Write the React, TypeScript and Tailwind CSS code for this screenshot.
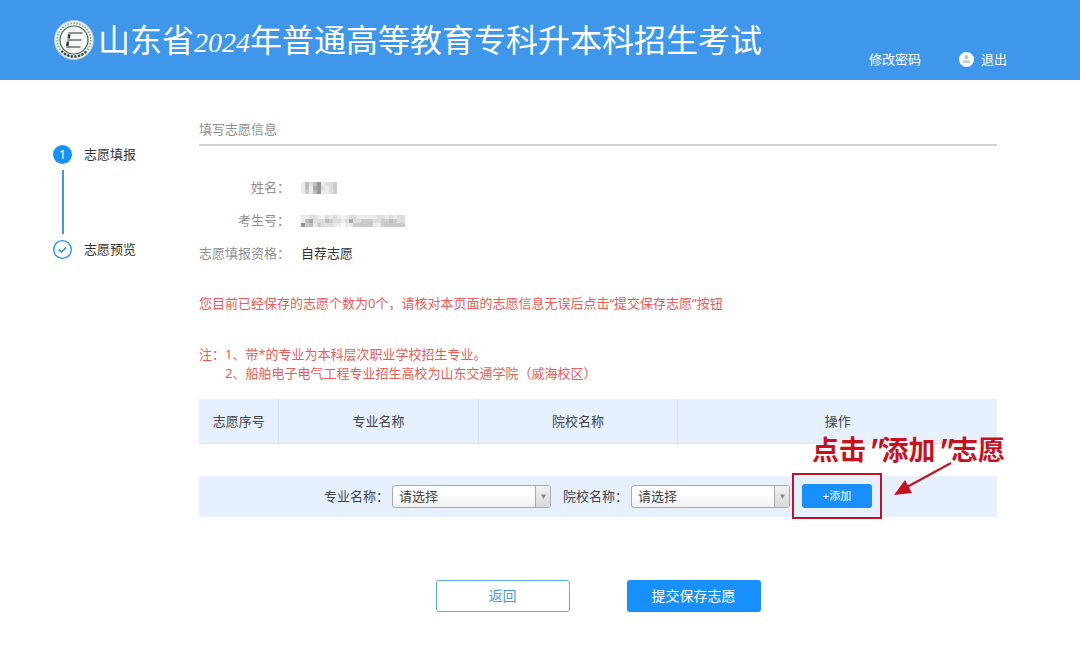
import React from "react";

const nameMosaic = ["142461223", "141562123", "131461123"];
const idMosaic = [
  "11221021210122111112212122",
  "14522243221252233322334322",
  "63413222110113333311333333",
];
const shades = ["#f8f8f8", "#ebebeb", "#dddddd", "#cbcbcb", "#bdbdbd", "#a9a9a9", "#949494"];

function Mosaic({ rows, cellWidth, cellHeight, label }: { rows: string[]; cellWidth: number; cellHeight: number; label: string }) {
  const width = rows[0].length * cellWidth;
  const height = rows.length * cellHeight;
  return (
    <svg width={width} height={height} viewBox={`0 0 ${width} ${height}`} role="img" aria-label={label} shapeRendering="crispEdges">
      {rows.map((row, y) =>
        row.split("").map((shade, x) => (
          <rect key={`${x}-${y}`} x={x * cellWidth} y={y * cellHeight} width={cellWidth} height={cellHeight} fill={shades[Number(shade)]} />
        )),
      )}
    </svg>
  );
}

function Logo() {
  return (
    <svg width="40" height="40" viewBox="0 0 40 40" aria-hidden="true" className="shrink-0">
      <circle cx="20" cy="20" r="19.5" fill="#e9f1ee" stroke="#b9ccc4" />
      <circle cx="20" cy="20" r="16.8" fill="none" stroke="#8fa398" strokeWidth="1.6" strokeDasharray="1.5 1.5" />
      <circle cx="20" cy="20" r="14" fill="#f5f8f6" stroke="#456a50" strokeWidth="1.2" />
      <path d="M7.5 31A16.8 16.8 0 0 0 32.5 31" fill="none" stroke="#34433a" strokeWidth="2.4" strokeDasharray="2 1.6" />
      <path d="M15 13H28.5M14 20H27.5M12.5 27H26.5" stroke="#8d9390" strokeWidth="2.2" />
      <path d="M15.6 12L13.2 28" stroke="#8d9390" strokeWidth="2" />
      <path d="M15.2 14.5L14.8 18M13.8 22L13.2 26" stroke="#24402d" strokeWidth="2.4" />
    </svg>
  );
}

function UserIcon() {
  return (
    <svg width="15" height="15" viewBox="0 0 15 15" aria-hidden="true">
      <circle cx="7.5" cy="7.5" r="7.5" fill="#fff" />
      <circle cx="7.5" cy="5.2" r="2.1" fill="#c3c8d0" />
      <path d="M3.5 11c0-2 1.5-3 4-3s4 1 4 3z" fill="#c3c8d0" />
    </svg>
  );
}

function Field({ label, children }: { label: string; children: React.ReactNode }) {
  return (
    <div className="flex h-[33px] items-center">
      <dt className="w-[91px] text-right whitespace-nowrap text-[#8f8f8f]">{label}</dt>
      <dd className="ml-[11px] text-[#333]">{children}</dd>
    </div>
  );
}

function Picker({ id, label }: { id: string; label: string }) {
  return (
    <div className="flex items-center">
      <label htmlFor={id}>{label}</label>
      <div className="relative ml-[3px]">
        <select
          id={id}
          className="block h-[23px] w-[159px] appearance-none rounded-[3px] border border-[#aaa] bg-linear-to-b from-white from-40% to-[#f0f0f0] pl-1.5 text-[13px] leading-[21px] text-[#444]"
        >
          <option>请选择</option>
        </select>
        <span className="pointer-events-none absolute inset-y-px right-px flex w-[15px] items-center justify-center rounded-r-[2px] border-l border-[#aaa] bg-linear-to-b from-[#f2f2f2] to-[#d8d8d8]">
          <svg width="5" height="5" viewBox="0 0 5 5" aria-hidden="true">
            <path d="M0 0.5H5L2.5 5Z" fill="#888" />
          </svg>
        </span>
      </div>
    </div>
  );
}

export default function App() {
  return (
    <div className="min-h-screen bg-white font-['Noto_Sans','Noto_Sans_CJK_SC',sans-serif] text-[13px] leading-[19px] text-[#444]">
      <header className="flex h-20 items-center justify-between bg-[#3e97ea] pr-[73px] pl-[54px] text-white">
        <div className="flex items-center">
          <Logo />
          <h1 className="ml-1 font-['Noto_Sans_CJK_SC',sans-serif] text-[32px] leading-10 font-normal whitespace-nowrap">
            山东省<span className="font-['Liberation_Serif',serif] text-[28px] italic">2024</span>年普通高等教育专科升本科招生考试
          </h1>
        </div>
        <nav className="mt-[38px] flex items-center gap-[38px] whitespace-nowrap">
          <a href="#password">修改密码</a>
          <a href="#logout" className="flex items-center gap-[7px]">
            <UserIcon />
            退出
          </a>
        </nav>
      </header>

      <div className="flex pr-[83px] pl-[53px]">
        <aside className="w-[146px] shrink-0 pt-[65px] text-[#333]">
          <ol>
            <li className="flex items-center gap-3">
              <span className="flex size-[19px] items-center justify-center rounded-full bg-[#1890ff] text-[12px] text-white">1</span>
              志愿填报
            </li>
            <li>
              <div className="my-1.5 ml-[9px] h-16 w-0.5 bg-[#3f97e6]" />
              <div className="flex items-center gap-3">
                <svg width="19" height="19" viewBox="0 0 19 19" fill="none" stroke="#1890ff" aria-hidden="true">
                  <circle cx="9.5" cy="9.5" r="8.8" strokeWidth="1.3" />
                  <path d="M5.8 9.6L8.5 12L13.2 7.4" strokeWidth="1.5" />
                </svg>
                志愿预览
              </div>
            </li>
          </ol>
        </aside>

        <main className="min-w-0 flex-1 pt-10">
          <h2 className="border-b-2 border-[#d2d2d2] pb-[5px] font-normal text-[#8f8f8f]">填写志愿信息</h2>
          <dl className="mt-[25px]">
            <Field label="姓名：">
              <Mosaic rows={nameMosaic} cellWidth={4} cellHeight={4} label="姓名" />
            </Field>
            <Field label="考生号：">
              <Mosaic rows={idMosaic} cellWidth={4} cellHeight={4} label="考生号" />
            </Field>
            <Field label="志愿填报资格：">自荐志愿</Field>
          </dl>

          <p className="mt-6 text-[#ee5a55]">
            您目前已经保存的志愿个数为0个，请核对本页面的志愿信息无误后点击“提交保存志愿”按钮
          </p>
          <div className="mt-8 flex text-[#ee5a55]">
            <span>注：</span>
            <ol>
              <li>1、带*的专业为本科层次职业学校招生专业。</li>
              <li>2、船舶电子电气工程专业招生高校为山东交通学院（威海校区）</li>
            </ol>
          </div>

          <table className="mt-4 w-full table-fixed border-collapse bg-[#e6f0ff]">
            <thead>
              <tr className="h-11 border-b border-[#dce6f3]">
                <th className="w-[10%] border-r border-[#d3e0f0] pt-0.5 font-normal">志愿序号</th>
                <th className="w-[25%] border-r border-[#d3e0f0] pt-0.5 font-normal">专业名称</th>
                <th className="w-[25%] border-r border-[#d3e0f0] pt-0.5 font-normal">院校名称</th>
                <th className="pt-0.5 font-normal">操作</th>
              </tr>
            </thead>
          </table>

          <form className="mt-8 flex h-[41px] items-center justify-center gap-3 bg-[#e6f0ff]">
            <Picker id="major" label="专业名称：" />
            <Picker id="college" label="院校名称：" />
            <div className="relative">
              <button type="button" className="block h-6 w-[70px] rounded-[3px] bg-[#1890ff] text-[11px] leading-6 text-white">
                +添加
              </button>
              <div className="pointer-events-none absolute -inset-x-[10px] -inset-y-[11px] border-2 border-[#c11228]" />
              <div className="pointer-events-none absolute -top-[49px] left-2.5 text-[#c8101e]">
                <p className="font-['Noto_Sans_CJK_SC',sans-serif] text-[27px] leading-7 font-bold whitespace-nowrap">
                  点击<span className="italic">"</span>添加<span className="italic">"</span>志愿
                </p>
                <svg width="60" height="34" viewBox="0 0 60 34" aria-hidden="true" className="absolute top-[27px] left-[82px]">
                  <path d="M57 1L13 25" stroke="#c8101e" strokeWidth="2" />
                  <path d="M0 33L11 18L18 31Z" fill="#c8101e" />
                </svg>
              </div>
            </div>
          </form>

          <div className="mt-[63px] flex justify-center gap-[57px] text-[14px]">
            <button type="button" className="h-8 w-[134px] rounded-[3px] border border-[#5aabee] bg-white text-[#3f97e6]">返回</button>
            <button type="button" className="h-8 w-[134px] rounded-[3px] bg-[#1890ff] text-white">提交保存志愿</button>
          </div>
        </main>
      </div>
    </div>
  );
}
